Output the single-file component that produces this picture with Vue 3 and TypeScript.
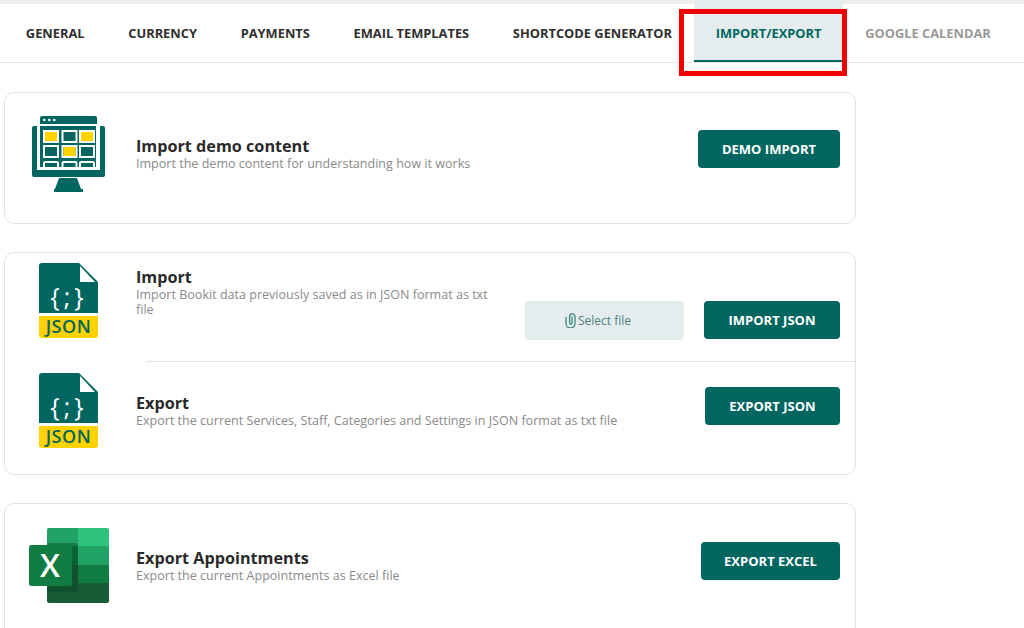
<script setup lang="ts">
const tabs = [
  { label: 'GENERAL', state: '' },
  { label: 'CURRENCY', state: '' },
  { label: 'PAYMENTS', state: '' },
  { label: 'EMAIL TEMPLATES', state: '' },
  { label: 'SHORTCODE GENERATOR', state: '' },
  { label: 'IMPORT/EXPORT', state: 'active' },
  { label: 'GOOGLE CALENDAR', state: 'muted' },
]
</script>

<template>
  <div class="page">
    <div class="topstrip"></div>
    <nav class="tabs">
      <a v-for="t in tabs" :key="t.label" class="tab" :class="t.state">{{ t.label }}</a>
    </nav>
    <div class="annotation"></div>

    <main class="content">
      <section class="card card-demo">
        <div class="icon-col">
          <svg width="73" height="76" viewBox="0 0 73 76">
            <path fill="#00665f" d="M8 2a2 2 0 0 1 2-2h53a2 2 0 0 1 2 2v6H8z"/>
            <g fill="#fff"><circle cx="12.300" cy="4" r="1.300"/><circle cx="17.300" cy="4" r="1.300"/><circle cx="22.300" cy="4" r="1.300"/></g>
            <rect x="8" y="10" width="56" height="41" fill="#00665f"/>
            <path fill="#00665f" d="M0 12a2 2 0 0 1 2-2h3v44H0zM68 10h3a2 2 0 0 1 2 2v42h-5z"/>
            <path fill="#00665f" d="M0 54h73v5a2 2 0 0 1-2 2H2a2 2 0 0 1-2-2z"/>
            <g fill="#00665f" stroke="#fff" stroke-width="2">
              <rect x="12" y="15" width="14" height="11"/>
              <rect x="30.500" y="15" width="14" height="11"/>
              <rect x="48" y="15" width="14" height="11"/>
              <rect x="12" y="30" width="14" height="11"/>
              <rect x="30.500" y="30" width="14" height="11"/>
              <rect x="48" y="30" width="14" height="11"/>
              <path d="M12 51v-4a1 1 0 0 1 1-1h12a1 1 0 0 1 1 1v4M30.500 51v-4a1 1 0 0 1 1-1h12a1 1 0 0 1 1 1v4M48 51v-4a1 1 0 0 1 1-1h12a1 1 0 0 1 1 1v4"/>
            </g>
            <g fill="#ffd200">
              <rect x="13" y="16" width="12" height="9"/>
              <rect x="49" y="16" width="12" height="9"/>
              <rect x="31.500" y="31" width="12" height="9"/>
            </g>
            <path fill="#00665f" d="M27 62h18l4 11H23zM22 73h29v3H22z"/>
          </svg>
        </div>
        <div class="text">
          <h3>Import demo content</h3>
          <p>Import the demo content for understanding how it works</p>
        </div>
        <button class="btn btn-demo">DEMO IMPORT</button>
      </section>

      <section class="card card-json">
        <div class="row row-import">
          <div class="icon-col">
            <svg width="59" height="75" viewBox="0 0 59 75">
              <path fill="#00665f" d="M3 0h37l19 19v31H0V3a3 3 0 0 1 3-3z"/>
              <path fill="#fff" d="M41 3l15 16H41z"/>
              <path fill="#ffd200" d="M0 53h59v19a3 3 0 0 1-3 3H3a3 3 0 0 1-3-3z"/>
              <text x="30" y="43" class="braces">{;}</text>
              <text x="29.500" y="70" class="jsonword">JSON</text>
            </svg>
          </div>
          <div class="text text-import">
            <h3>Import</h3>
            <p>Import Bookit data previously saved as in JSON format as txt file</p>
          </div>
          <div class="select-file">
            <svg width="11" height="15" viewBox="0 0 11 15" fill="none" stroke="#3f8682" stroke-width="1.300" stroke-linecap="round">
              <path d="M1 4.500v6a4.500 4.500 0 0 0 9 0V3.500a2.700 2.700 0 0 0-5.400 0V10a1.200 1.200 0 0 0 2.400 0V4"/>
            </svg>
            <span>Select file</span>
          </div>
          <button class="btn btn-import">IMPORT JSON</button>
        </div>
        <div class="divider"></div>
        <div class="row row-export">
          <div class="icon-col">
            <svg width="59" height="75" viewBox="0 0 59 75">
              <path fill="#00665f" d="M3 0h37l19 19v31H0V3a3 3 0 0 1 3-3z"/>
              <path fill="#fff" d="M41 3l15 16H41z"/>
              <path fill="#ffd200" d="M0 53h59v19a3 3 0 0 1-3 3H3a3 3 0 0 1-3-3z"/>
              <text x="30" y="43" class="braces">{;}</text>
              <text x="29.500" y="70" class="jsonword">JSON</text>
            </svg>
          </div>
          <div class="text">
            <h3>Export</h3>
            <p>Export the current Services, Staff, Categories and Settings in JSON format as txt file</p>
          </div>
          <button class="btn btn-export">EXPORT JSON</button>
        </div>
      </section>

      <section class="card card-excel">
        <div class="icon-col">
          <svg width="80" height="75" viewBox="0 0 80 75">
            <path fill="#21a366" d="M18 2a2 2 0 0 1 2-2h29v18H18z"/>
            <path fill="#2fc27d" d="M49 0h29a2 2 0 0 1 2 2v16H49z"/>
            <rect x="18" y="18" width="31" height="19" fill="#107c41"/>
            <rect x="49" y="18" width="31" height="19" fill="#21a366"/>
            <rect x="18" y="37" width="31" height="18" fill="#185c37"/>
            <rect x="49" y="37" width="31" height="18" fill="#107c41"/>
            <path fill="#185c37" d="M18 55h62v18a2 2 0 0 1-2 2H20a2 2 0 0 1-2-2z"/>
            <path fill="#0b3f26" opacity=".4" d="M18 15h29a2 2 0 0 1 2 2v45a2 2 0 0 1-2 2H18z"/>
            <rect x="0" y="17" width="43" height="41" rx="2.500" fill="#107c41"/>
            <text x="21" y="49" class="excel-x">X</text>
          </svg>
        </div>
        <div class="text">
          <h3>Export Appointments</h3>
          <p>Export the current Appointments as Excel file</p>
        </div>
        <button class="btn btn-excel">EXPORT EXCEL</button>
      </section>
    </main>
  </div>
</template>

<style>
html, body { margin: 0; background: #fff; overflow: hidden; }
</style>

<style scoped>
.page {
  position: relative;
  width: 1024px;
  height: 628px;
  overflow: hidden;
  background: #fff;
  font-family: "Open Sans", "Noto Sans", sans-serif;
  color: #2b2b2b;
}
.topstrip { height: 4px; background: #eeeeee; }
.tabs {
  display: flex;
  height: 59px;
  box-sizing: border-box;
  border-bottom: 1px solid #e6e6e6;
  padding-left: 4px;
}
.tab {
  box-sizing: border-box;
  height: 58px;
  padding: 20.500px 21.850px 0;
  font-size: 12.850px;
  line-height: 16px;
  font-weight: 700;
  color: #2e2e2e;
  white-space: nowrap;
}
.tab.active {
  color: #00665f;
  background: #e4eced;
  border-bottom: 2px solid #00665f;
  box-shadow: 0 -4px 0 #e4eced;
}
.tab.muted { color: #999; }
.annotation {
  position: absolute;
  left: 679px;
  top: 9px;
  width: 168px;
  height: 67px;
  box-sizing: border-box;
  border: 5px solid #f00000;
}
.content {
  width: 852px;
  margin-left: 4px;
  padding-top: 29px;
  display: flex;
  flex-direction: column;
  gap: 28px;
}
.card {
  box-sizing: border-box;
  border: 1px solid #e2e2e2;
  border-radius: 10px;
  background: #fff;
  flex-shrink: 0;
}
.card-demo, .card-excel {
  display: flex;
  align-items: center;
  padding-right: 15px;
}
.card-demo { height: 132px; padding-bottom: 18px; }
.card-excel { height: 150px; padding-bottom: 34px; }
.card-json { height: 223px; }
.icon-col {
  width: 131px;
  flex: none;
  align-self: flex-start;
  box-sizing: border-box;
  display: flex;
}
.card-demo .icon-col { padding: 23px 0 0 27px; }
.card-excel .icon-col { padding: 24px 0 0 24px; }
.row .icon-col { padding-left: 34px; }
.row-import .icon-col { padding-top: 10px; }
.row-export .icon-col { padding-top: 11px; }
.text { flex: 1; min-width: 0; padding-top: 8px; }
h3 {
  margin: 0;
  font-size: 16.200px;
  line-height: 20px;
  font-weight: 700;
  color: #2a2a2a;
}
p {
  margin: 0;
  font-size: 12.550px;
  line-height: 15px;
  color: #8a8a8a;
}
.btn {
  flex: none;
  height: 38px;
  border: 0;
  border-radius: 4px;
  background: #00665f;
  color: #fff;
  font: 700 13px/16px "Open Sans", "Noto Sans", sans-serif;
  padding: 0;
}
.btn-demo { width: 142px; }
.btn-import { width: 136px; margin-top: 48px; }
.btn-export { width: 135px; }
.btn-excel { width: 139px; }
.row { display: flex; padding-right: 15px; box-sizing: border-box; }
.row-import { height: 108px; align-items: flex-start; }
.text-import { flex: none; width: 358px; padding-top: 14px; margin-right: 31px; }
.select-file {
  flex: none;
  width: 159px;
  height: 39px;
  margin-top: 48px;
  margin-right: 20px;
  padding-right: 13px;
  box-sizing: border-box;
  border-radius: 4px;
  background: #e4eced;
  color: #4e7f7e;
  font-size: 12px;
  display: flex;
  align-items: center;
  justify-content: center;
  gap: 2px;
}
.divider { height: 1px; background: #e2e2e2; margin-left: 141px; }
.row-export { height: 113px; align-items: center; padding-bottom: 26px; }
.row-export .text { padding-top: 10px; }
.braces {
  font: 500 25px "Open Sans", sans-serif;
  fill: #fff;
  text-anchor: middle;
  letter-spacing: 4px;
}
.jsonword {
  font: 600 18px "Open Sans", sans-serif;
  fill: #00665f;
  text-anchor: middle;
  letter-spacing: .5px;
}
.excel-x {
  font: 600 32px "Open Sans", sans-serif;
  fill: #fff;
  text-anchor: middle;
}
</style>
